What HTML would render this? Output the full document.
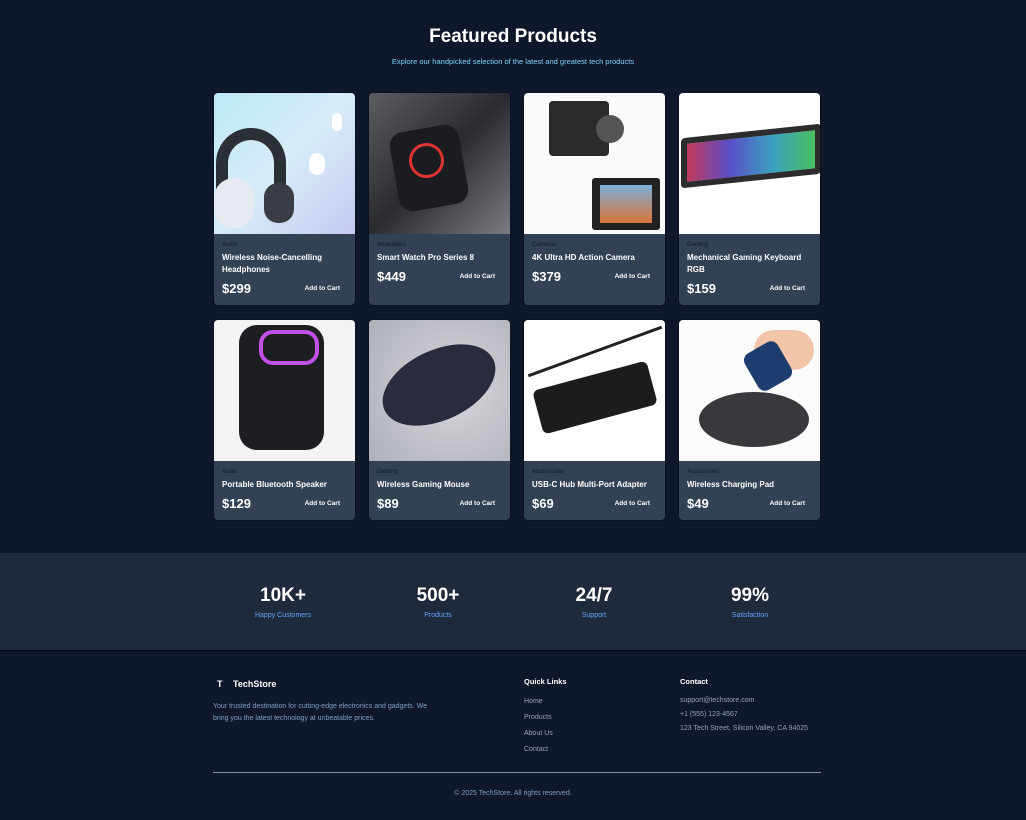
<!DOCTYPE html>
<html><head><meta charset="utf-8"><style>
*{margin:0;padding:0;box-sizing:border-box}
body{width:1026px;height:820px;background:#0f172a;font-family:"Liberation Sans",sans-serif;color:#fff;position:relative;overflow:hidden}
.t{position:absolute;left:0;width:1026px;text-align:center}
.card{position:absolute;width:143px;background:#334155;border:1px solid #0b1120;border-radius:5px;overflow:hidden}
.img{height:141px;position:relative;overflow:hidden}
.cat{position:absolute;left:8px;font-size:6px;color:#0f172a}
.name{position:absolute;left:8px;width:125px;font-size:8px;font-weight:bold;line-height:12px}
.price{position:absolute;left:8px;font-size:13px;font-weight:bold}
.btn{position:absolute;right:15px;font-size:6.5px;font-weight:bold}
.stat{position:absolute;width:160px;text-align:center}
.stat b{display:block;font-size:19px}
.stat span{display:block;font-size:7px;color:#60a5fa;margin-top:5px}
.f{position:absolute;font-size:7px;color:#94a3b8}
</style></head><body>
<div class="t" style="top:26px;font-size:19px;font-weight:bold">Featured Products</div>
<div class="t" style="top:57px;font-size:7.5px;color:#7dd3fc">Explore our handpicked selection of the latest and greatest tech products</div>

<!-- row 1 -->
<div class="card" style="left:213px;top:92px;height:214px">
<div class="img" style="background:linear-gradient(135deg,#bde8f6,#d8ecf8 50%,#c6c9f0)">
<div style="position:absolute;left:2px;top:35px;width:70px;height:85px;border:12px solid #2d2f36;border-bottom:none;border-radius:40px 40px 0 0"></div>
<div style="position:absolute;left:0;top:85px;width:40px;height:50px;background:#e8eaf2;border-radius:20px"></div>
<div style="position:absolute;left:50px;top:90px;width:30px;height:40px;background:#3a3d44;border-radius:14px"></div>
<div style="position:absolute;left:95px;top:60px;width:16px;height:22px;background:#fff;border-radius:8px"></div>
<div style="position:absolute;left:118px;top:20px;width:10px;height:18px;background:#fff;border-radius:5px"></div>
</div>
<div class="cat" style="top:149px">Audio</div>
<div class="name" style="top:159px">Wireless Noise-Cancelling Headphones</div>
<div class="price" style="top:188px">$299</div><div class="btn" style="top:192px">Add to Cart</div>
</div>
<div class="card" style="left:368px;top:92px;height:214px">
<div class="img" style="background:linear-gradient(135deg,#5b5d61,#2a2b2e 50%,#7a7c80)">
<div style="position:absolute;left:25px;top:35px;width:70px;height:80px;background:#1b1c1f;border-radius:14px;transform:rotate(-10deg)"></div>
<div style="position:absolute;left:40px;top:50px;width:35px;height:35px;border:3px solid #d33;border-radius:50%;transform:rotate(-10deg)"></div>
</div>
<div class="cat" style="top:149px">Wearables</div>
<div class="name" style="top:159px">Smart Watch Pro Series 8</div>
<div class="price" style="top:176px">$449</div><div class="btn" style="top:180px">Add to Cart</div>
</div>
<div class="card" style="left:523px;top:92px;height:214px">
<div class="img" style="background:#fafafa">
<div style="position:absolute;left:25px;top:8px;width:60px;height:55px;background:#2a2a2a;border-radius:4px"></div>
<div style="position:absolute;left:72px;top:22px;width:28px;height:28px;background:#555;border-radius:50%"></div>
<div style="position:absolute;left:68px;top:85px;width:68px;height:52px;background:#222;border-radius:3px"></div>
<div style="position:absolute;left:76px;top:92px;width:52px;height:38px;background:linear-gradient(#7db0d8,#d9743a)"></div>
</div>
<div class="cat" style="top:149px">Cameras</div>
<div class="name" style="top:159px">4K Ultra HD Action Camera</div>
<div class="price" style="top:176px">$379</div><div class="btn" style="top:180px">Add to Cart</div>
</div>
<div class="card" style="left:678px;top:92px;height:214px">
<div class="img" style="background:#fff">
<div style="position:absolute;left:2px;top:38px;width:140px;height:50px;background:linear-gradient(90deg,#c03a5a,#5a4ec8,#3aa0c0,#4ac060);transform:skewY(-6deg);border:6px solid #2c2c2e;border-radius:4px"></div>
</div>
<div class="cat" style="top:149px">Gaming</div>
<div class="name" style="top:159px">Mechanical Gaming Keyboard RGB</div>
<div class="price" style="top:188px">$159</div><div class="btn" style="top:192px">Add to Cart</div>
</div>

<!-- row 2 -->
<div class="card" style="left:213px;top:319px;height:202px">
<div class="img" style="background:#f4f4f4">
<div style="position:absolute;left:25px;top:5px;width:85px;height:125px;background:#1d1e22;border-radius:18px"></div>
<div style="position:absolute;left:45px;top:10px;width:60px;height:35px;border:4px solid #c050e8;border-radius:14px"></div>
</div>
<div class="cat" style="top:149px">Audio</div>
<div class="name" style="top:159px">Portable Bluetooth Speaker</div>
<div class="price" style="top:176px">$129</div><div class="btn" style="top:180px">Add to Cart</div>
</div>
<div class="card" style="left:368px;top:319px;height:202px">
<div class="img" style="background:radial-gradient(circle at 60% 50%,#d6d7dc,#aeb0b8)">
<div style="position:absolute;left:10px;top:30px;width:120px;height:70px;background:#2a2c3e;border-radius:50%;transform:rotate(-25deg)"></div>
</div>
<div class="cat" style="top:149px">Gaming</div>
<div class="name" style="top:159px">Wireless Gaming Mouse</div>
<div class="price" style="top:176px">$89</div><div class="btn" style="top:180px">Add to Cart</div>
</div>
<div class="card" style="left:523px;top:319px;height:202px">
<div class="img" style="background:#fff">
<div style="position:absolute;left:12px;top:55px;width:118px;height:45px;background:#1c1c1c;border-radius:6px;transform:rotate(-15deg)"></div>
<div style="position:absolute;left:0;top:30px;width:142px;height:3px;background:#222;transform:rotate(-20deg)"></div>
</div>
<div class="cat" style="top:149px">Accessories</div>
<div class="name" style="top:159px">USB-C Hub Multi-Port Adapter</div>
<div class="price" style="top:176px">$69</div><div class="btn" style="top:180px">Add to Cart</div>
</div>
<div class="card" style="left:678px;top:319px;height:202px">
<div class="img" style="background:#fbfbfb">
<div style="position:absolute;left:20px;top:72px;width:110px;height:55px;background:#38393c;border-radius:50%"></div>
<div style="position:absolute;left:75px;top:10px;width:60px;height:40px;background:#f1c6a8;border-radius:20px"></div>
<div style="position:absolute;left:70px;top:25px;width:38px;height:42px;background:#1c3d6e;border-radius:8px;transform:rotate(-30deg)"></div>
</div>
<div class="cat" style="top:149px">Accessories</div>
<div class="name" style="top:159px">Wireless Charging Pad</div>
<div class="price" style="top:176px">$49</div><div class="btn" style="top:180px">Add to Cart</div>
</div>

<!-- stats -->
<div style="position:absolute;left:0;top:553px;width:1026px;height:98px;background:#1e293b;border-bottom:1px solid #020617"></div>
<div class="stat" style="left:203px;top:585px"><b>10K+</b><span>Happy Customers</span></div>
<div class="stat" style="left:358px;top:585px"><b>500+</b><span>Products</span></div>
<div class="stat" style="left:514px;top:585px"><b>24/7</b><span>Support</span></div>
<div class="stat" style="left:670px;top:585px"><b>99%</b><span>Satisfaction</span></div>

<!-- footer -->
<div style="position:absolute;left:217px;top:679px;font-size:9px;font-weight:bold">T</div>
<div style="position:absolute;left:233px;top:679px;font-size:9px;font-weight:bold">TechStore</div>
<div class="f" style="left:213px;top:701px;line-height:11.5px;width:230px;color:#7fa0c0">Your trusted destination for cutting-edge electronics and gadgets. We bring you the latest technology at unbeatable prices.</div>
<div style="position:absolute;left:524px;top:677px;font-size:7.5px;font-weight:bold">Quick Links</div>
<div class="f" style="left:524px;top:698px">Home</div>
<div class="f" style="left:524px;top:714px">Products</div>
<div class="f" style="left:524px;top:730px">About Us</div>
<div class="f" style="left:524px;top:746px">Contact</div>
<div style="position:absolute;left:680px;top:677px;font-size:7.5px;font-weight:bold">Contact</div>
<div class="f" style="left:680px;top:697px">support@techstore.com</div>
<div class="f" style="left:680px;top:711px">+1 (555) 123-4567</div>
<div class="f" style="left:680px;top:725px">123 Tech Street, Silicon Valley, CA 94025</div>
<div style="position:absolute;left:213px;top:772px;width:608px;height:1px;background:#8a94a6"></div>
<div class="t f" style="top:790px;color:#7fa0c0">© 2025 TechStore. All rights reserved.</div>
</body></html>
